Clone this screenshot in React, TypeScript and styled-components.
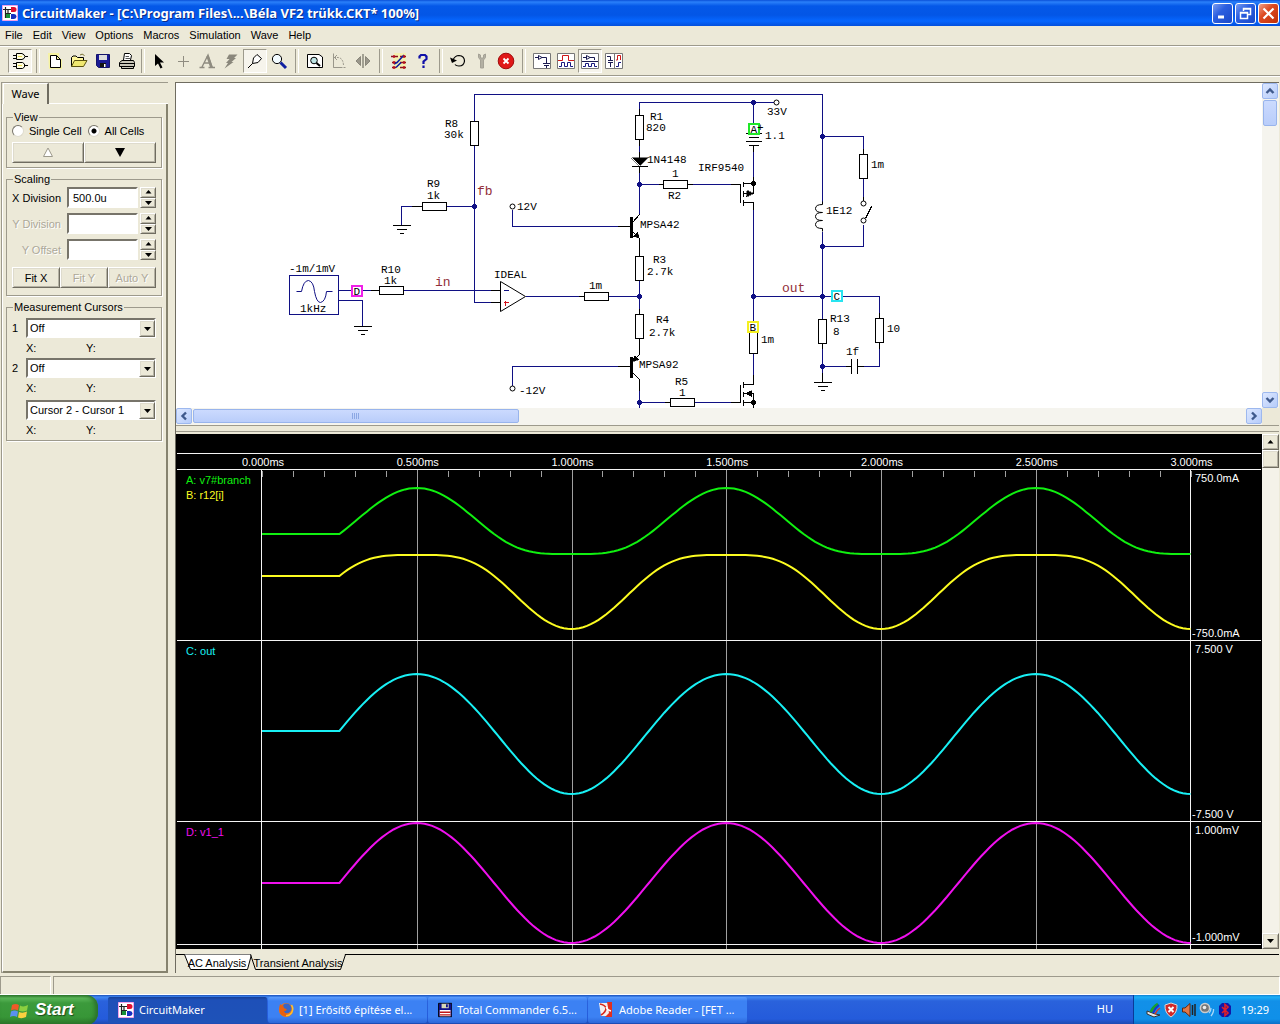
import React, { useState } from "react";
import styled, { createGlobalStyle, css } from "styled-components";

const face = "#ece9d8";
const shade = "#9d9a8c";
const ui = `"Liberation Sans", Arial, sans-serif`;
const tahoma = `"Noto Sans", "Open Sans", sans-serif`;
const mono = `"Liberation Mono", "Courier New", monospace`;

const GlobalStyle = createGlobalStyle`
  * { box-sizing: border-box; }
  body { margin: 0; background: ${face}; font: 11px/14px ${ui}; color: #000; }
  button, input, select { font: inherit; color: inherit; margin: 0; padding: 0; }
  svg { display: block; }
`;

const raised = css`
  background: ${face};
  border: 1px solid;
  border-color: #fff #6f6c60 #6f6c60 #fff;
  box-shadow: 1px 1px 0 #dedbcd inset, -1px -1px 0 #b5b2a4 inset;
`;

const Window = styled.div`
  display: flex;
  flex-direction: column;
  min-height: 100vh;
  overflow: hidden;
`;

const TitleBar = styled.header`
  display: flex;
  align-items: center;
  height: 26px;
  padding: 0 1px 0 2px;
  gap: 4px;
  background: linear-gradient(#0a50d8 0, #2a80fa 2px, #0458e8 6px, #0356e6 15px, #0666ff 21px, #0450dc 26px);
`;

const Title = styled.h1`
  flex: 1;
  margin: 0;
  color: #fff;
  font: bold 13px/20px ${tahoma};
  text-shadow: 1px 1px 0 #0a2c88;
  white-space: nowrap;
`;

const WindowButtons = styled.div`
  display: flex;
  gap: 2px;
`;

const WindowButton = styled.button<{ $danger?: boolean }>`
  display: grid;
  place-items: center;
  width: 21px;
  height: 21px;
  border: 1px solid #fff;
  border-radius: 3px;
  background: ${(p) =>
    p.$danger
      ? "linear-gradient(135deg, #f0a088, #dd4a22 40%, #c03008)"
      : "linear-gradient(135deg, #7a9cf0, #2c5fe0 40%, #1a48c8)"};
`;

const MenuBar = styled.nav`
  display: flex;
  gap: 10px;
  height: 20px;
  padding: 0 5px 2px;
  align-items: center;
  border-bottom: 1px solid ${shade};
`;

const MenuItem = styled.button`
  border: 0;
  background: none;
  line-height: 16px;
`;

const Toolbar = styled.div`
  display: flex;
  align-items: center;
  height: 30px;
  padding: 0 8px;
  border-top: 1px solid #fff;
  border-bottom: 1px solid ${shade};
`;

const ToolButton = styled.button<{ $pressed?: boolean }>`
  display: grid;
  place-items: center;
  width: 24px;
  height: 24px;
  border: 1px solid;
  border-color: ${(p) => (p.$pressed ? "#9d9a8c #fff #fff #9d9a8c" : "transparent")};
  background: ${(p) => (p.$pressed ? "#f6f4ec" : "none")};
`;

const Separator = styled.span<{ $size: number }>`
  width: ${(p) => p.$size}px;
  height: 24px;
  display: flex;
  justify-content: center;
  &::before {
    content: "";
    width: 2px;
    border-left: 1px solid ${shade};
    border-right: 1px solid #fff;
  }
`;

const Main = styled.main`
  flex: 1;
  display: flex;
  gap: 7px;
  padding: 5px 1px 3px 1px;
  border-top: 1px solid #fff;
`;

const Sidebar = styled.aside`
  display: flex;
  flex-direction: column;
  width: 167px;
  border-left: 1px solid ${shade};
  border-top: 1px solid ${shade};
`;

const SideTabs = styled.div`
  display: flex;
  height: 21px;
  padding-left: 1px;
`;

const SideTab = styled.button`
  width: 46px;
  border: 0;
  border-left: 1px solid #fff;
  border-top: 1px solid #fff;
  border-right: 2px solid #6f6c60;
  background: ${face};
  font: 11px/18px ${tahoma};
`;

const SideTabRest = styled.span`
  flex: 1;
  border-bottom: 1px solid #fff;
`;

const SidePanel = styled.div`
  flex: 1;
  display: flex;
  flex-direction: column;
  gap: 4px;
  padding: 6px 4px 0 3px;
  border-left: 1px solid #fff;
  border-right: 2px solid #86836f;
  border-bottom: 2px solid #86836f;
`;

const Group = styled.fieldset`
  display: flex;
  flex-direction: column;
  min-width: 0;
  margin: 0;
  padding: 0 5px 4px;
  border: 1px solid ${shade};
  box-shadow: 1px 1px 0 #fff;
`;

const Legend = styled.legend`
  margin-left: 1px;
  padding: 0 1px;
  line-height: 14px;
`;

const RadioRow = styled.div`
  display: flex;
  gap: 6px;
  height: 14px;
  margin-bottom: 4px;
`;

const RadioLabel = styled.label`
  display: flex;
  align-items: center;
  gap: 5px;
  white-space: nowrap;
`;

const Radio = styled.input`
  appearance: none;
  width: 12px;
  height: 12px;
  border: 1px solid;
  border-color: #77746a #dedbcd #dedbcd #77746a;
  border-radius: 50%;
  background: #fff;
  &:checked {
    background: radial-gradient(circle, #000 0 2px, #fff 3px);
  }
`;

const ButtonRow = styled.div<{ $spaced?: boolean }>`
  display: flex;
  margin-top: ${(p) => (p.$spaced ? 2 : 0)}px;
`;

const PushButton = styled.button`
  ${raised}
  flex: 1;
  display: grid;
  place-items: center;
  height: 21px;
  &:disabled {
    color: #aca899;
    text-shadow: 1px 1px 0 #fff;
  }
`;

const ScaleRows = styled.div`
  display: flex;
  flex-direction: column;
  gap: 5px;
  padding: 1px 0 3px;
`;

const ScaleRow = styled.div`
  display: flex;
  align-items: center;
  gap: 2px;
`;

const ScaleLabel = styled.label<{ $off?: boolean }>`
  flex: 1;
  padding-right: 4px;
  text-align: right;
  white-space: nowrap;
  color: ${(p) => (p.$off ? "#aca899" : "#000")};
  text-shadow: ${(p) => (p.$off ? "1px 1px 0 #fff" : "none")};
`;

const TextBox = styled.input`
  width: 71px;
  height: 21px;
  padding: 0 4px;
  border: 2px solid;
  border-color: #77746a #fff #fff #77746a;
  background: #fff;
`;

const Spinner = styled.div`
  display: flex;
  flex-direction: column;
  width: 16px;
  height: 21px;
`;

const SpinButton = styled.button`
  ${raised}
  flex: 1;
  min-height: 0;
  display: grid;
  place-items: center;
`;

const CursorGrid = styled.div`
  display: grid;
  grid-template-columns: 14px 1fr;
  row-gap: 4px;
  align-items: center;
  padding-top: 4px;
`;

const SelectBox = styled.div<{ $apart?: boolean }>`
  position: relative;
  display: flex;
  margin-top: ${(p) => (p.$apart ? 2 : 0)}px;
`;

const Select = styled.select`
  appearance: none;
  flex: 1;
  min-width: 0;
  height: 20px;
  padding: 0 18px 0 2px;
  border: 2px solid;
  border-color: #77746a #fff #fff #77746a;
  border-radius: 0;
  background: #fff;
`;

const SelectArrow = styled.span`
  ${raised}
  position: absolute;
  top: 2px;
  right: 1px;
  bottom: 1px;
  width: 16px;
  display: grid;
  place-items: center;
  pointer-events: none;
`;

const Readout = styled.div`
  grid-column: 2;
  display: flex;
  line-height: 12px;
  & > span {
    width: 60px;
  }
`;

const Workspace = styled.section`
  flex: 1;
  min-width: 0;
  display: flex;
  flex-direction: column;
  border-left: 1px solid #6f6c60;
  border-top: 1px solid #6f6c60;
`;

const SchematicPane = styled.div`
  display: grid;
  grid-template-columns: minmax(0, 1fr) 17px;
  grid-template-rows: 325px 17px;
`;

const Sheet = styled.div`
  overflow: hidden;
  background: #fff;
`;

const Splitter = styled.div`
  height: 9px;
  border-top: 1px solid ${shade};
  display: flex;
  align-items: flex-end;
  padding-bottom: 2px;
  &::before {
    content: "";
    flex: 1;
    border-bottom: 1px solid ${shade};
  }
`;

const XpTrack = styled.div<{ $across?: boolean }>`
  display: flex;
  flex-direction: ${(p) => (p.$across ? "row" : "column")};
  background: #f5f4ee;
`;

const XpScrollButton = styled.button`
  display: grid;
  place-items: center;
  width: 16px;
  height: 16px;
  border: 1px solid #9db8ee;
  border-radius: 2px;
  background: linear-gradient(135deg, #dce7ff, #b6ccfa);
`;

const XpThumb = styled.div<{ $across?: boolean }>`
  display: grid;
  place-items: center;
  margin: 1px;
  width: ${(p) => (p.$across ? "30%" : "14px")};
  height: ${(p) => (p.$across ? "14px" : "26px")};
  border: 1px solid #98b4ec;
  border-radius: 2px;
  background: linear-gradient(#cbdafe, #b9cdfa);
`;

const TrackSpace = styled.span`
  flex: 1;
`;

const WavePane = styled.div`
  flex: 1;
  display: grid;
  grid-template-columns: minmax(0, 1fr) 17px;
`;

const Scope = styled.div`
  overflow: hidden;
  background: #000;
`;

const ClassicTrack = styled.div`
  display: flex;
  flex-direction: column;
  background: #f4f2e9;
`;

const ClassicButton = styled.button`
  ${raised}
  display: grid;
  place-items: center;
  height: 16px;
`;

const ClassicThumb = styled.div`
  ${raised}
  height: 18px;
`;

const SheetTabs = styled.div`
  display: flex;
  height: 24px;
  padding: 5px 0 0 8px;
  background: linear-gradient(#000, #000) 0 5px / 100% 1px no-repeat;
`;

const SheetTab = styled.button<{ $wide?: boolean }>`
  position: relative;
  width: ${(p) => (p.$wide ? 96 : 66)}px;
  height: 17px;
  border: 0;
  background: none;
  white-space: nowrap;
  & > svg {
    position: absolute;
    left: 0;
    top: 0;
  }
  & > span {
    position: relative;
  }
`;

const StatusBar = styled.footer`
  display: grid;
  grid-template-columns: 51px 1fr;
  gap: 2px;
  height: 19px;
  border-bottom: 1px solid #fff;
`;

const StatusCell = styled.div`
  border-top: 1px solid ${shade};
  border-left: 1px solid ${shade};
  border-right: 1px solid #fff;
`;

const Taskbar = styled.footer`
  display: flex;
  height: 30px;
  color: #fff;
  font: 11px/28px ${tahoma};
  background: linear-gradient(#1a50b8 0, #4289f4 2px, #2a62dc 6px, #245bdb 24px, #1b47a8 30px);
`;

const StartButton = styled.button`
  display: flex;
  align-items: center;
  gap: 6px;
  width: 98px;
  margin-right: 10px;
  padding: 0 0 0 10px;
  border: 0;
  border-radius: 0 12px 12px 0;
  color: #fff;
  font: italic bold 17px/28px ${ui};
  text-shadow: 1px 1px 1px #1c4a1c;
  background: linear-gradient(#2d7a2d 0, #5cb85a 3px, #3c9a3c 8px, #379637 22px, #2a7229 30px);
  box-shadow: -3px 0 4px #2b702b inset;
`;

const Task = styled.button<{ $active?: boolean }>`
  display: flex;
  align-items: center;
  gap: 5px;
  width: 159px;
  height: 26px;
  margin: 2px 1px 0 0;
  padding: 0 10px;
  border: 0;
  border-radius: 2px;
  color: #fff;
  line-height: 24px;
  white-space: nowrap;
  background: ${(p) =>
    p.$active
      ? "linear-gradient(#163f98 0, #1e50b8 3px, #1e52b8)"
      : "linear-gradient(#5c9cfc 0, #3c81f3 4px, #3c81f3 20px, #2c68d8)"};
`;

const Language = styled.span`
  margin-left: auto;
  padding-right: 20px;
`;

const Tray = styled.div`
  display: flex;
  align-items: center;
  gap: 2px;
  width: 147px;
  padding-left: 11px;
  border-left: 1px solid #0a3a98;
  background: linear-gradient(#1080d0 0, #1cb0f8 2px, #1290e8 6px, #0f90e9 24px, #0a68c0 30px);
  & > time {
    margin-left: 6px;
  }
`;

/* ---------- icons ---------- */

const Ic = ({ children, w = 18, h = 18 }: { children: React.ReactNode; w?: number; h?: number }) => (
  <svg width={w} height={h} viewBox={`0 0 ${w} ${h}`} fill="none" stroke="#000" aria-hidden="true">
    {children}
  </svg>
);

const Tri = ({ up, big, off }: { up?: boolean; big?: boolean; off?: boolean }) => {
  const s = big ? 10 : 7;
  const h = big ? 9 : 4;
  return (
    <svg width={s} height={h} viewBox={`0 0 ${s} ${h}`} aria-hidden="true">
      <path
        d={up ? `M${s / 2} 0L${s - 0.5} ${h - 0.5}H0.5Z` : `M0 0H${s}L${s / 2} ${h}Z`}
        fill={off ? "#fff" : "#000"}
        stroke={off ? "#9d9a8c" : "none"}
      />
    </svg>
  );
};

const Chevron = ({ turn }: { turn: number }) => (
  <svg width="10" height="10" viewBox="0 0 10 10" aria-hidden="true">
    <path d="M1.500 7L5 3.500L8.500 7" transform={`rotate(${turn} 5 5)`} fill="none" stroke="#3f5a8c" strokeWidth="2.400" />
  </svg>
);

const AppIcon = () => (
  <Ic w={16} h={16}>
    <path d="M.5 .5H15.500V15.500H.5Z" fill="#fff" stroke="#f0a0e8" />
    <path d="M1 4.500H10M3.500 2V12.500H8M6 4V13M3 8.500H9" stroke="#222" strokeWidth="1.200" />
    <path d="M9 2H12A2.500 2.500 0 0 1 12 7H9Z" fill="#e01030" stroke="none" />
    <path d="M4 9H8V13H4Z" fill="#189038" stroke="none" />
    <path d="M9 9H12A2.500 2.500 0 0 1 12 14H9Z" fill="#1830c0" stroke="none" />
  </Ic>
);

const icons = {
  gates: (
    <Ic>
      <path d="M5.500 1.500H11Q13.500 2.500 14 4.500Q13.500 7 11 7.500H5.500Z" fill="#fffde0" />
      <path d="M2 3.500H5M2 6.500H5M14 4.500H17M2 11.500H5M2 14.500H5M13 13.500H17" />
      <path d="M5.500 10.500H11.500L13.500 12V15L11.500 16.500H5.500Z" fill="#fffde0" />
      <path d="M7 4.500H11M7 13.500H11" stroke="#e8dc50" />
    </Ic>
  ),
  fresh: (
    <Ic>
      <path d="M2 1H13V7H16V17H3Z" fill="#fbf78c" stroke="none" opacity=".7" />
      <path d="M4.500 3.500H10.500L14.500 7.500V15.500H4.500ZM10.500 3.500V7.500H14.500" fill="#fff" />
    </Ic>
  ),
  open: (
    <Ic>
      <path d="M1.500 14.500V5.500L3 4H6L7.500 5.500H13.500V8" fill="#fff79a" />
      <path d="M1.500 14.500L4.500 8.500H17L13.500 14.500Z" fill="#f0e870" stroke="#5c5410" />
      <path d="M10 3Q12 1 14.500 3.500" stroke="#7a7230" />
    </Ic>
  ),
  save: (
    <Ic>
      <path d="M2.500 2.500H15.500V15.500H4.500L2.500 13.500Z" fill="#1a1a94" stroke="#14146a" />
      <path d="M5 3H13V8H5Z" fill="#ddd" stroke="none" />
      <path d="M6 11H12V15H6Z" fill="#111" stroke="none" />
      <path d="M10 12H11.500V15H10Z" fill="#fff" stroke="none" />
    </Ic>
  ),
  print: (
    <Ic>
      <path d="M5.500 8L6.500 1.500H11.500L13.500 3.500L12.500 8" fill="#fff" />
      <path d="M7.500 4.500H11M7.500 6.500H12" stroke="#555" />
      <path d="M1.500 10.500L4 8.500H15.500L16.500 10.500V14.500H1.500ZM1.500 11.500H16M3.500 14.500V16.500H15.500V14.500" fill="#c9c6b9" />
    </Ic>
  ),
  arrow: (
    <Ic>
      <path d="M5 2V14L8 11.500L10.500 16.500L12.500 15.500L10 10.500H14Z" fill="#000" stroke="none" />
    </Ic>
  ),
  plus: (
    <Ic>
      <path d="M9.500 4V15M4 9.500H15" stroke="#8f8c80" />
    </Ic>
  ),
  text: (
    <Ic>
      <path d="M1.500 15.500H6.500M10.500 15.500H17M4 15L10 3L14 15M6 11H12" stroke="#8f8c80" strokeWidth="1.400" />
      <path d="M9.500 4L13.500 15.500" stroke="#8f8c80" strokeWidth="2.500" />
    </Ic>
  ),
  bolt: (
    <Ic>
      <path d="M7 2.500H15.500L12 6H14L9.500 10H11.500L2.500 16.500L6 11H4L7.500 7H4.500Z" fill="#8a877b" stroke="none" />
    </Ic>
  ),
  probe: (
    <Ic>
      <path d="M2 16L6.500 11.500M6.500 11.500L7.500 6L11 2.500L15.500 6.500L12 10.500Z" fill="#fff" />
    </Ic>
  ),
  lens: (
    <Ic>
      <circle cx="7" cy="7" r="4.600" fill="#f2fbff" />
      <path d="M10.500 10.500L16 16" stroke="#1020a0" strokeWidth="3" />
    </Ic>
  ),
  preview: (
    <Ic>
      <path d="M1.500 2.500H13L16.500 5V15.500H1.500Z" fill="#fff" />
      <circle cx="8" cy="8.500" r="3.300" fill="#bfe5e5" />
      <path d="M10.500 11L14 14" strokeWidth="2" />
    </Ic>
  ),
  rotate: (
    <Ic>
      <path d="M3.500 1.500V15.500H16.500M4 5.500H8Q13 6 13.500 13" stroke="#9a978b" strokeDasharray="2 1" />
      <path d="M3.500 3V15.500H12M7 3L4.500 5.500L7 8" stroke="#9a978b" />
    </Ic>
  ),
  flip: (
    <Ic>
      <path d="M9 2V16" stroke="#8a877b" strokeWidth="1.500" />
      <path d="M6.500 4.500V13.500L2 9ZM11.500 4.500V13.500L16 9Z" fill="#9a978b" stroke="#8a877b" />
    </Ic>
  ),
  wires: (
    <Ic>
      <path d="M4 1H16V17H3Z" fill="#f8f2a0" stroke="none" opacity=".7" />
      <path d="M1 4.500H8M2 10.500H6M10 4.500H16M2 15.500H6M10 10.500H16M10 15.500H16" stroke="#8a1020" strokeWidth="1.400" />
      <path d="M4 12L7 10.500L14 3M6 15.500L11 10.500" stroke="#1020a0" strokeWidth="1.600" />
      <path d="M4 3V6M14 3V6M4 9V12M14 9V12M4 14V17M14 14V17" stroke="#c01020" strokeWidth="1.500" />
    </Ic>
  ),
  help: (
    <Ic>
      <path d="M5.500 6.500V4.500L7 3H11L12.500 4.500V7L9.500 9.500V12M9.500 13.500V16" stroke="#1010a8" strokeWidth="2.200" />
    </Ic>
  ),
  reset: (
    <Ic>
      <path d="M4 8Q6 3.500 10 3.500Q15.500 4 15.500 9Q15 14 10 14Q7 14 6 12.500" strokeWidth="1.200" />
      <path d="M1 5.500L8 8.500L3 11Z" fill="#000" stroke="none" />
    </Ic>
  ),
  wrench: (
    <Ic>
      <path d="M5.500 2V5.500L7.500 8V16H10.500V8L12.500 5.500V2L10.500 3V6H7.500V3Z" fill="#b3b0a3" stroke="#a5a296" />
    </Ic>
  ),
  stop: (
    <Ic>
      <circle cx="9" cy="9" r="7.800" fill="#e01818" stroke="#a00c0c" />
      <path d="M6.500 6.500L11.500 11.500M11.500 6.500L6.500 11.500" stroke="#fff" strokeWidth="1.800" />
    </Ic>
  ),
  viewA: (
    <Ic>
      <path d="M.5 1.500H17.500V16.500H.5Z" fill="#fff" stroke="#777" />
      <path d="M2 5.500H5M5.500 3.500V7.500L9 5.500ZM9 5.500H13.500V11M10 11.500H17M11 13.500H16M13.500 14V16" stroke="#1a1a50" />
    </Ic>
  ),
  viewB: (
    <Ic>
      <path d="M.5 1.500H17.500V16.500H.5Z" fill="#fff" stroke="#777" />
      <path d="M1 8.500H5.500V3.500H11.500V8.500H17" stroke="#d01818" />
      <path d="M2 14.500H4.500V10.500H7.500V14.500H10.500V10.500H13.500V14.500H16" stroke="#1a1a80" />
    </Ic>
  ),
  viewC: (
    <Ic>
      <path d="M.5 1.500H17.500V16.500H.5Z" fill="#fff" stroke="#777" />
      <path d="M1 9.500H17M2 5.500H5M5.500 3.500V7.500L9 5.500ZM9 5.500H13.500V8" stroke="#1a1a50" />
      <path d="M2 14.500H4.500V11.500H7.500V14.500H10.500V11.500H13.500V14.500H16" stroke="#1a1a80" />
    </Ic>
  ),
  viewD: (
    <Ic>
      <path d="M.5 1.500H17.500V16.500H.5ZM9.500 1.500V16" fill="#fff" stroke="#777" />
      <path d="M2 4.500H5.500V8M3 8.500H8M3 10.500H8M5.500 11V15" stroke="#1a1a50" />
      <path d="M11 8H12.500V3.500H15.500V8" stroke="#d01818" />
      <path d="M11 14.500H13.500V10.500H16" stroke="#1a1a80" />
    </Ic>
  ),
};

type Tool = [keyof typeof icons, string, boolean?];
const toolGroups: { after: number; tools: Tool[] }[] = [
  { after: 11, tools: [["gates", "Parts browser", true]] },
  { after: 8, tools: [["fresh", "New"], ["open", "Open"], ["save", "Save"], ["print", "Print"]] },
  {
    after: 12,
    tools: [["arrow", "Arrow tool"], ["plus", "Wire tool"], ["text", "Text tool"], ["bolt", "Delete tool"], ["probe", "Probe tool", true], ["lens", "Zoom tool"]],
  },
  { after: 12, tools: [["preview", "Fit to window"], ["rotate", "Rotate"], ["flip", "Mirror"]] },
  { after: 11, tools: [["wires", "Digital mode"], ["help", "Help"]] },
  { after: 12, tools: [["reset", "Reset"], ["wrench", "Setup"], ["stop", "Stop"]] },
  { after: 0, tools: [["viewA", "Schematic view"], ["viewB", "Waveform view"], ["viewC", "Split horizontally", true], ["viewD", "Split vertically"]] },
];

const StartFlag = () => (
  <Ic w={19} h={19}>
    <path d="M2 4Q5.500 2 9 4L8 9.500Q4.500 7.500 1 9.500Z" fill="#f05a28" stroke="none" />
    <path d="M10 4.500Q13.500 6.500 18 4L17 9.500Q13 11.500 9 9.800Z" fill="#8cd040" stroke="none" />
    <path d="M1 10.500Q4.500 8.500 8 10.500L7 16Q3.500 14 0 16Z" fill="#5a90f0" stroke="none" />
    <path d="M9 11Q13 12.500 17 10.500L16 16Q12 18 8 16.500Z" fill="#fbd040" stroke="none" />
  </Ic>
);

const FirefoxIcon = () => (
  <Ic w={16} h={16}>
    <circle cx="8" cy="8" r="7" fill="#f07818" stroke="none" />
    <circle cx="8.500" cy="6.500" r="5" fill="#3866c8" stroke="none" />
    <path d="M2 2Q0 9 3 12.500Q8 16 12 12Q7 12.500 6 9Q9 9 8.500 7Q5 6.500 5.500 3.500Q3.500 4 2 2Z" fill="#e86010" stroke="none" />
    <path d="M13.500 3Q16 7 13.500 11Q11 14 8 13.500" stroke="#fcc030" strokeWidth="1.500" />
  </Ic>
);

const DiskIcon = () => (
  <Ic w={16} h={16}>
    <path d="M.5 .5H15.500V15.500H.5Z" fill="#10108a" />
    <path d="M4 1H12V6H4Z" fill="#d8d8b8" stroke="none" />
    <path d="M9 1.500H11V5H9Z" fill="#10108a" stroke="none" />
    <path d="M2 8H14V15H2Z" fill="#fff" stroke="none" />
    <path d="M2 10.500H14M2 13.500H14" stroke="#c01818" strokeWidth="1.500" />
  </Ic>
);

const AdobeIcon = () => (
  <Ic w={16} h={16}>
    <path d="M1 1H14V14H3Z" fill="#f4f0ee" stroke="none" />
    <path d="M9 0H14V15H7L11 11Z" fill="#e03020" stroke="none" />
    <path d="M2 2Q7 3 8 6Q8 10 3 13" stroke="#d82818" strokeWidth="1.600" />
    <path d="M8 5Q9 8 13 9" stroke="#fff" strokeWidth="1.300" />
  </Ic>
);

const TrayIcons = () => (
  <>
    <Ic w={16} h={16}>
      <path d="M2 9L10 12L15 13L9 15L2 12Z" fill="#e8e8e8" stroke="#333" />
      <path d="M6 10Q8 5 13 2" stroke="#18a030" strokeWidth="3" />
      <path d="M8 11Q10 6 14 3" stroke="#1830d8" strokeWidth="2" />
      <path d="M10 12Q12 8 15 6" stroke="#e03020" strokeWidth="1.500" />
    </Ic>
    <Ic w={16} h={16}>
      <path d="M8 1L14 3Q14.500 11 8 15Q1.500 11 2 3Z" fill="#d02828" stroke="#d8d8d8" />
      <path d="M5.500 5L10.500 10M10.500 5L5.500 10" stroke="#fff" strokeWidth="2" />
    </Ic>
    <Ic w={16} h={16}>
      <path d="M1.500 6H4L9 1.500V14.500L4 10H1.500Z" fill="#e07848" stroke="#602810" />
      <path d="M11.500 3V13M14 2V14" stroke="#222" strokeWidth="1.500" />
    </Ic>
    <Ic w={16} h={16}>
      <circle cx="6" cy="6" r="4.600" fill="#777" stroke="#ccc" strokeWidth="1.500" />
      <circle cx="5.500" cy="5.500" r="1.800" fill="#eee" stroke="none" />
      <path d="M10 11Q12 9 12 6M12 14Q15 10 14.500 7" stroke="#a8d8f8" strokeWidth="1.300" />
    </Ic>
    <Ic w={16} h={16}>
      <path d="M5 1H11L14 4V12L11 15H5L2 12V4Z" fill="#1018a8" stroke="none" />
      <path d="M5 5L11 11L8 13.500V2.500L11 5L5 11" stroke="#e02028" strokeWidth="1.600" />
    </Ic>
  </>
);

/* ---------- schematic ---------- */

const Drawing = styled.svg`
  font: 11px ${mono};
  .net { font-size: 13px; fill: #922e38; }
`;

const navy = "#101084";
type Pt = { x: number; y: number };

const Resistor = ({ x, y, flat }: Pt & { flat?: boolean }) => (
  <rect x={x} y={y} width={flat ? 24 : 8} height={flat ? 8 : 24} fill="#fff" stroke="#000" />
);
const Dot = ({ x, y, black }: Pt & { black?: boolean }) => <circle cx={x} cy={y} r="2.500" fill={black ? "#000" : navy} stroke="none" />;
const Terminal = ({ x, y }: Pt) => <circle cx={x} cy={y} r="2.500" fill="#fff" stroke="#000" shapeRendering="auto" />;
const Ground = ({ x, y }: Pt) => <path d={`M${x - 9} ${y}h18M${x - 5} ${y + 4}h10M${x - 2} ${y + 8}h4`} stroke="#000" />;
const Probe = ({ x, y, color, name }: Pt & { color: string; name: string }) => (
  <g>
    <rect x={x} y={y} width="10" height="10" fill="#fff" stroke={color} strokeWidth="2" />
    <text x={x + 2} y={y + 9} fill="#000" stroke="none">{name}</text>
  </g>
);

const labels: [number, number, string][] = [
  [445, 127, "R8"], [444, 138, "30k"], [427, 187, "R9"], [427, 199, "1k"], [517, 210, "12V"], [519, 394, "-12V"],
  [289, 272, "-1m/1mV"], [300, 312, "1kHz"], [381, 273, "R10"], [384, 284, "1k"], [494, 278, "IDEAL"], [589, 289, "1m"],
  [650, 120, "R1"], [646, 131, "820"], [647, 163, "1N4148"], [672, 177, "1"], [668, 199, "R2"], [640, 228, "MPSA42"],
  [653, 263, "R3"], [647, 275, "2.7k"], [656, 323, "R4"], [649, 336, "2.7k"], [639, 368, "MPSA92"], [675, 385, "R5"],
  [679, 396, "1"], [698, 171, "IRF9540"], [767, 115, "33V"], [765, 139, "1.1"], [871, 168, "1m"], [826, 214, "1E12"],
  [830, 322, "R13"], [833, 335, "8"], [887, 332, "10"], [846, 355, "1f"], [761, 343, "1m"], [757, 131, "+"],
];
const nets: [number, number, string][] = [[477, 195, "fb"], [435, 286, "in"], [782, 292, "out"]];

const Schematic = () => (
  <Drawing width="1085" height="325" viewBox="176 83 1085 325" role="img" aria-label="Amplifier schematic">
    <g transform="translate(.5 .5)" fill="none" shapeRendering="crispEdges">
      <path
        stroke={navy}
        d="M474 121V94H822V201M474 145V302H490M401 225V206H411M446 206H474M338 290H351M362 290H370M338 300H362V326M403 290H490M525 296H578M608 296H639M512 209V226H617M512 385V366H617M639 108V102H773M639 145V151M639 172V214M639 184H658M692 184H730M639 244V250M639 280V308M639 344V350M639 379V408M639 402H664M694 402H730M753 102V122M753 151V176M753 209V322M753 353V374M753 296H879V312M822 136H863V148M863 178V196M863 224V246H822M822 231V319M822 348V378M822 366H845M863 366H879V348"
      />
      <path
        stroke="#000"
        d="M490 290H500M490 302H500M378 290H370M411 206H422M617 226H630M617 366H630M578 296H584M639 108V115M639 139V145M639 151V157M639 166V172M658 184H663M687 184H692M730 184H740V202M639 214L632 222M632 231L639 238V256M639 308V314M639 338V354L632 361M632 372L639 379V390M664 402H670M730 402H740V384M753 145V151M753 176V193H743M743 183H753M743 202H753V209M753 374V384H743M743 393H753V408M743 402H753M743 181V186M743 190V196M743 199V205M743 381V387M743 391V396M743 399V405M745 133H761M748 137H758M745 141H761M748 145H758M863 148V154M863 196V200M865 218L871 206M879 312V318M879 342V348M851 358V373M857 358V373M845 366H851M857 366H863M822 343V348M822 372V382"
      />
      <path d="M630 216V237M631 216V237M632 216V237M630 356V377M631 356V377M632 356V377" stroke="#000" />
      <path d="M822 201V204Q815 204 815 208T822 212Q815 212 815 216T822 220Q815 220 815 224T822 228V231" stroke="#000" shapeRendering="auto" />
      <path d="M631 157H647L639 165ZM753 193L746 190V196ZM744 393L751 390V396ZM639 238L633 236L637 231ZM632 361L634 355L638 359Z" fill="#000" stroke="#000" strokeWidth=".5" />
      <path d="M631 166H647" stroke="#000" />
      <path d="M500 281V311L525 296Z" stroke="#000" shapeRendering="auto" />
      <path d="M503 290H508" stroke={navy} />
      <path d="M503 302H508M505 300V305" stroke="#d01018" />
      <rect x="289" y="275" width="49" height="39" stroke={navy} />
      <path d="M296 291H301Q303 280 308 280Q313 281 314 291Q316 302 320 302Q325 301 326 291H332" stroke={navy} shapeRendering="auto" />
      <Resistor x={470} y={121} />
      <Resistor x={422} y={202} flat />
      <Resistor x={379} y={286} flat />
      <Resistor x={584} y={292} flat />
      <Resistor x={635} y={115} />
      <Resistor x={663} y={180} flat />
      <Resistor x={635} y={256} />
      <Resistor x={635} y={314} />
      <Resistor x={670} y={398} flat />
      <Resistor x={749} y={329} />
      <Resistor x={859} y={154} />
      <Resistor x={818} y={319} />
      <Resistor x={875} y={318} />
      <Ground x={401} y={225} />
      <Ground x={362} y={326} />
      <Ground x={822} y={382} />
      <Dot x={474} y={206} />
      <Dot x={639} y={184} />
      <Dot x={639} y={296} />
      <Dot x={639} y={402} />
      <Dot x={753} y={102} />
      <Dot x={753} y={183} black />
      <Dot x={753} y={296} />
      <Dot x={753} y={402} black />
      <Dot x={822} y={136} />
      <Dot x={822} y={246} />
      <Dot x={822} y={296} />
      <Dot x={822} y={366} />
      <Terminal x={512} y={206} />
      <Terminal x={512} y={388} />
      <Terminal x={776} y={102} />
      <Terminal x={863} y={203} />
      <Terminal x={863} y={220} />
      <Probe x={351} y={285} color="#f020e8" name="D" />
      <Probe x={748} y={123} color="#20e828" name="A" />
      <Probe x={747} y={321} color="#f4f020" name="B" />
      <Probe x={831} y={290} color="#28e4f0" name="C" />
    </g>
    {labels.map(([x, y, s], i) => (
      <text key={i} x={x} y={y}>{s}</text>
    ))}
    {nets.map(([x, y, s]) => (
      <text key={s} x={x} y={y} className="net">{s}</text>
    ))}
  </Drawing>
);

/* ---------- oscilloscope ---------- */

const ScopeDrawing = styled.svg`
  font: 11px ${ui};
`;

const traces = [
  { color: "#10f010", base: 534, f: (s: number) => 36.5 * s + 13 * s * s - 3.5 * s ** 3 },
  { color: "#fcfc20", base: 576, f: (s: number) => 39.5 * s - 16 * s * s - 2.5 * s ** 3 },
  { color: "#18f0f4", base: 731, f: (s: number) => 60 * s - 3 * s * s },
  { color: "#f010ee", base: 883, f: (s: number) => 60 * s },
];

const left = 262;
const perMs = 309.5;

const tracePath = (base: number, f: (s: number) => number) => {
  const pts = [`M${left} ${base}`];
  for (let t = 0.25; t <= 3.0001; t += 0.0125) {
    const s = Math.sin(2 * Math.PI * (t - 0.25));
    pts.push(`L${(left + t * perMs).toFixed(1)} ${(base - f(s)).toFixed(1)}`);
  }
  return pts.join("");
};

const times = [0, 0.5, 1, 1.5, 2, 2.5, 3];
const channels: [number, string, string][] = [
  [484, "A: v7#branch", "#10f010"],
  [499, "B: r12[i]", "#fcfc20"],
  [655, "C: out", "#18f0f4"],
  [836, "D: v1_1", "#f010ee"],
];
const limits: [number, string][] = [
  [482, "750.0mA"], [637, "-750.0mA"], [653, "7.500 V"], [818, "-7.500 V"], [834, "1.000mV"], [941, "-1.000mV"],
];

const Oscilloscope = () => (
  <ScopeDrawing width="1085" height="515" viewBox="176 434 1085 515" role="img" aria-label="Transient waveforms">
    <g shapeRendering="crispEdges" transform="translate(.5 .5)">
      {times.slice(1, 6).map((t) => (
        <path key={t} d={`M${Math.round(left + t * perMs)} 469V949`} stroke="#a0a0a0" />
      ))}
      {Array.from({ length: 31 }, (_, i) => (
        <path key={i} d={`M${Math.round(left + i * 30.95)} 470V476`} stroke="#a0a0a0" />
      ))}
      <path d="M176 453H1261M176 469H1261M176 640H1261M176 821H1261M176 944H1261M261 469V949M1190 469V949" stroke="#f4f4f4" />
    </g>
    {traces.map((t) => (
      <path key={t.color} d={tracePath(t.base, t.f)} fill="none" stroke={t.color} strokeWidth="2" />
    ))}
    {times.map((t) => (
      <text key={t} x={left + t * perMs + 1} y="466" textAnchor="middle" fill="#fff">{t.toFixed(3)}ms</text>
    ))}
    {channels.map(([y, s, c]) => (
      <text key={s} x="186" y={y} fill={c}>{s}</text>
    ))}
    {limits.map(([y, s]) => (
      <text key={s} x={s[0] === "-" ? 1192 : 1195} y={y} fill="#fff">{s}</text>
    ))}
  </ScopeDrawing>
);

/* ---------- sidebar parts ---------- */

const Scale = ({ id, label, value, off }: { id: string; label: string; value: string; off?: boolean }) => (
  <ScaleRow>
    <ScaleLabel htmlFor={id} $off={off}>{label}</ScaleLabel>
    <TextBox id={id} defaultValue={value} disabled={off} />
    <Spinner>
      <SpinButton aria-label={`${label} up`}><Tri up /></SpinButton>
      <SpinButton aria-label={`${label} down`}><Tri /></SpinButton>
    </Spinner>
  </ScaleRow>
);

const Picker = ({ id, label, options, apart }: { id: string; label: string; options: string[]; apart?: boolean }) => (
  <>
    <label htmlFor={id} aria-label={label || "Difference"}>{label}</label>
    <SelectBox $apart={apart}>
      <Select id={id} defaultValue={options[0]}>
        {options.map((o) => <option key={o}>{o}</option>)}
      </Select>
      <SelectArrow><Tri /></SelectArrow>
    </SelectBox>
    <Readout><span>X:</span><span>Y:</span></Readout>
  </>
);

const tasks = [
  { name: "CircuitMaker", icon: <AppIcon />, active: true },
  { name: "[1] Erősítő építése el...", icon: <FirefoxIcon /> },
  { name: "Total Commander 6.5...", icon: <DiskIcon /> },
  { name: "Adobe Reader - [FET ...", icon: <AdobeIcon /> },
];

export default function App() {
  const [cells, setCells] = useState("all");
  return (
    <Window>
      <GlobalStyle />
      <TitleBar>
        <AppIcon />
        <Title>{"CircuitMaker - [C:\\Program Files\\...\\Béla VF2 trükk.CKT* 100%]"}</Title>
        <WindowButtons>
          <WindowButton aria-label="Minimize"><Ic w={13} h={13}><path d="M2 10H8" stroke="#fff" strokeWidth="3" /></Ic></WindowButton>
          <WindowButton aria-label="Restore"><Ic w={13} h={13}><path d="M4.500 4V1.500H11.500V7.500H9M1.500 5.500H8.500V11.500H1.500ZM1.500 6H8.500M4.500 2H11.500" stroke="#fff" strokeWidth="1.500" /></Ic></WindowButton>
          <WindowButton aria-label="Close" $danger><Ic w={13} h={13}><path d="M1.500 1.500L11.500 11.500M11.500 1.500L1.500 11.500" stroke="#fff" strokeWidth="2.200" /></Ic></WindowButton>
        </WindowButtons>
      </TitleBar>
      <MenuBar>
        {["File", "Edit", "View", "Options", "Macros", "Simulation", "Wave", "Help"].map((m) => <MenuItem key={m}>{m}</MenuItem>)}
      </MenuBar>
      <Toolbar>
        {toolGroups.map((g) => (
          <React.Fragment key={g.tools[0][0]}>
            {g.tools.map(([icon, name, pressed]) => (
              <ToolButton key={icon} aria-label={name} $pressed={pressed}>{icons[icon]}</ToolButton>
            ))}
            {g.after > 0 && <Separator $size={g.after} />}
          </React.Fragment>
        ))}
      </Toolbar>
      <Main>
        <Sidebar>
          <SideTabs>
            <SideTab>Wave</SideTab>
            <SideTabRest />
          </SideTabs>
          <SidePanel>
            <Group>
              <Legend>View</Legend>
              <RadioRow>
                <RadioLabel><Radio type="radio" name="cells" checked={cells === "single"} onChange={() => setCells("single")} />Single Cell</RadioLabel>
                <RadioLabel><Radio type="radio" name="cells" checked={cells === "all"} onChange={() => setCells("all")} />All Cells</RadioLabel>
              </RadioRow>
              <ButtonRow>
                <PushButton aria-label="Previous cell"><Tri up big off /></PushButton>
                <PushButton aria-label="Next cell"><Tri big /></PushButton>
              </ButtonRow>
            </Group>
            <Group>
              <Legend>Scaling</Legend>
              <ScaleRows>
                <Scale id="xdiv" label="X Division" value="500.0u" />
                <Scale id="ydiv" label="Y Division" value="" off />
                <Scale id="yoff" label="Y Offset" value="" off />
                <ButtonRow $spaced>
                  <PushButton>Fit X</PushButton>
                  <PushButton disabled>Fit Y</PushButton>
                  <PushButton disabled>Auto Y</PushButton>
                </ButtonRow>
              </ScaleRows>
            </Group>
            <Group>
              <Legend>Measurement Cursors</Legend>
              <CursorGrid>
                <Picker id="c1" label="1" options={["Off"]} />
                <Picker id="c2" label="2" options={["Off"]} />
                <Picker id="cd" label="" options={["Cursor 2 - Cursor 1"]} apart />
              </CursorGrid>
            </Group>
          </SidePanel>
        </Sidebar>
        <Workspace>
          <SchematicPane>
            <Sheet><Schematic /></Sheet>
            <XpTrack>
              <XpScrollButton aria-label="Scroll up"><Chevron turn={0} /></XpScrollButton>
              <XpThumb />
              <TrackSpace />
              <XpScrollButton aria-label="Scroll down"><Chevron turn={180} /></XpScrollButton>
            </XpTrack>
            <XpTrack $across>
              <XpScrollButton aria-label="Scroll left"><Chevron turn={270} /></XpScrollButton>
              <XpThumb $across><Ic w={8} h={6}><path d="M.5 0V6M2.500 0V6M4.500 0V6M6.500 0V6" stroke="#8ca8e4" /></Ic></XpThumb>
              <TrackSpace />
              <XpScrollButton aria-label="Scroll right"><Chevron turn={90} /></XpScrollButton>
            </XpTrack>
          </SchematicPane>
          <Splitter />
          <WavePane>
            <Scope><Oscilloscope /></Scope>
            <ClassicTrack>
              <ClassicButton aria-label="Waves up"><Tri up /></ClassicButton>
              <ClassicThumb />
              <TrackSpace />
              <ClassicButton aria-label="Waves down"><Tri /></ClassicButton>
            </ClassicTrack>
          </WavePane>
          <SheetTabs>
            <SheetTab>
              <Ic w={68} h={17}><path d="M.5 .5L6.500 15.500H63.500L67.500 .5" fill="#fff" /></Ic>
              <span>AC Analysis</span>
            </SheetTab>
            <SheetTab $wide>
              <Ic w={96} h={17}><path d="M1 0H95L90 15H5Z" fill={face} stroke="none" /><path d="M.5 .5L5.500 15.500H90.500L95.500 .5" /></Ic>
              <span>Transient Analysis</span>
            </SheetTab>
          </SheetTabs>
        </Workspace>
      </Main>
      <StatusBar>
        <StatusCell />
        <StatusCell />
      </StatusBar>
      <Taskbar>
        <StartButton><StartFlag />Start</StartButton>
        {tasks.map((t) => (
          <Task key={t.name} $active={t.active}>{t.icon}{t.name}</Task>
        ))}
        <Language>HU</Language>
        <Tray>
          <TrayIcons />
          <time>19:29</time>
        </Tray>
      </Taskbar>
    </Window>
  );
}
